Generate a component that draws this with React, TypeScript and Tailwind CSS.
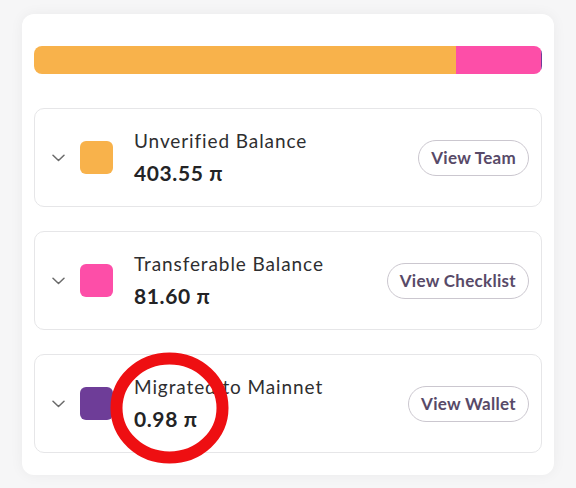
const rows = [
  { title: "Unverified Balance", value: 403.55, color: "bg-[#f8b24b]", action: "View Team" },
  { title: "Transferable Balance", value: 81.6, color: "bg-[#fd4ea8]", action: "View Checklist" },
  { title: "Migrated to Mainnet", value: 0.98, color: "bg-[#6e3d98]", action: "View Wallet" },
];

const barColors = ["bg-[#f8b24b]", "bg-[#fd4ea8]", "bg-[#6e3d98]"];

function Chevron() {
  return (
    <svg width="13" height="8" viewBox="0 0 13 8" fill="none" className="shrink-0">
      <path d="M1 1.2 6.5 6.5 12 1.2" stroke="#6b6b6b" strokeWidth="1.5" strokeLinecap="round" strokeLinejoin="round" />
    </svg>
  );
}

export default function App() {
  const total = rows.reduce((s, r) => s + r.value, 0);

  return (
    <div
      className="relative h-[488px] w-[576px] overflow-hidden bg-[#f6f6f7] pl-[22px] pt-[14px]"
      style={{ fontFamily: "Lato, 'Noto Sans', sans-serif" }}
    >
      <div className="w-[532px] rounded-xl bg-white px-3 pb-[22px] pt-8 shadow-[0_0_14px_rgba(0,0,0,0.05)]">
        <div className="flex h-7 w-full overflow-hidden rounded-lg">
          {rows.map((r, i) => (
            <div key={r.title} className={barColors[i]} style={{ width: `${(r.value / total) * 100}%` }} />
          ))}
        </div>

        <div className="mt-[34px] flex flex-col gap-6">
          {rows.map((r) => (
            <div
              key={r.title}
              className="flex h-[99px] items-center rounded-[10px] border border-[#e6e6e8] pl-[17px] pr-3"
            >
              <Chevron />
              <div className={`ml-[15px] h-[33px] w-[33px] shrink-0 rounded-md ${r.color}`} />
              <div className="ml-[21px] flex flex-1 flex-col">
                <span className="text-[19px] leading-[26px] tracking-[0.9px] text-[#2e2e30]">{r.title}</span>
                <span className="mt-[5px] text-[21px] font-bold leading-[28px] tracking-[0.6px] text-[#232325]">
                  {r.value.toFixed(2)} π
                </span>
              </div>
              <button className="h-9 rounded-full border border-[#cbc7cf] px-3 text-[17px] font-bold tracking-[0.3px] text-[#584a68]">
                {r.action}
              </button>
            </div>
          ))}
        </div>
      </div>

      <svg className="absolute left-[110px] top-[352px]" width="119" height="112" viewBox="0 0 119 112">
        <ellipse cx="59.5" cy="56" rx="53" ry="49.5" fill="none" stroke="#ee0f12" strokeWidth="12" />
      </svg>
    </div>
  );
}
